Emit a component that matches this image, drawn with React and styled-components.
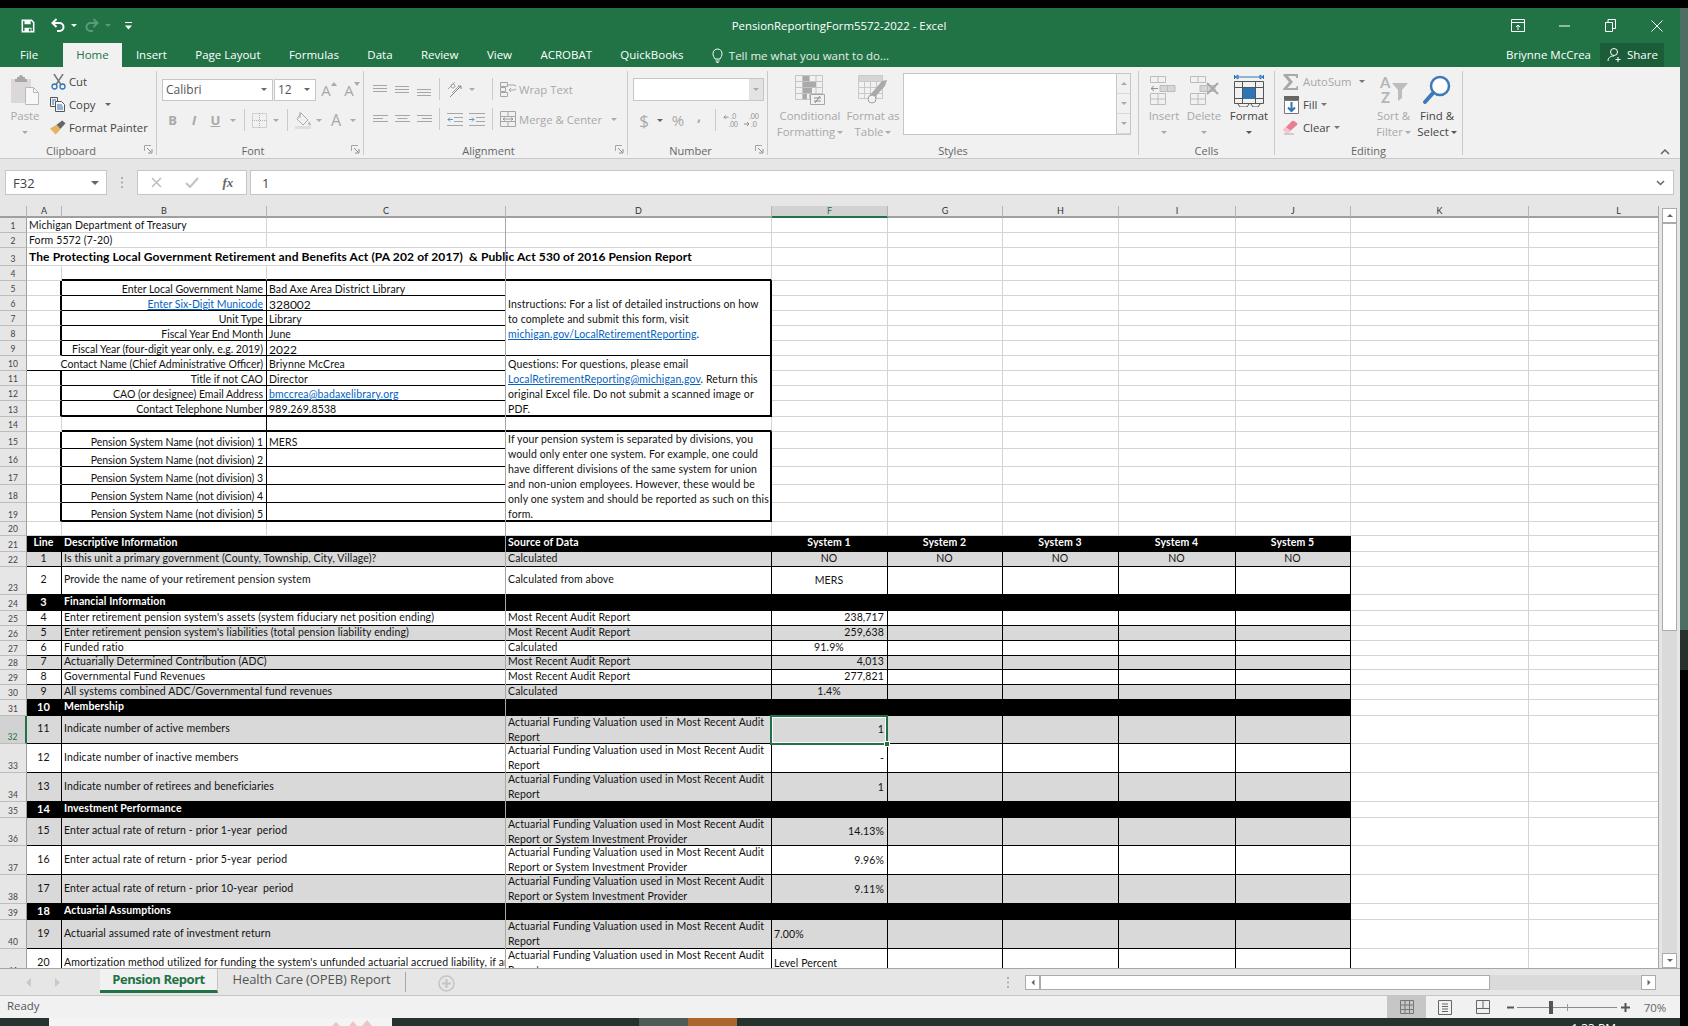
import React from "react";
import styled, { createGlobalStyle } from "styled-components";

const UI = '"Open Sans", "Noto Sans", sans-serif';
const CELL = 'Lato, "Liberation Sans", sans-serif';
const OFF = "#a8a8a8";
const ON = "#444";
const GREEN = "#217346";
const LIGHT = "1px solid #d4d4d4";
const THIN = "1px solid #000";
const THICK = "2px solid #000";

const Global = createGlobalStyle`
  html, body { margin: 0; padding: 0; background: #000; overflow: hidden; }
  * { box-sizing: border-box; }
`;

const Page = styled.div`
  width: 1688px;
  height: 1026px;
  display: flex;
  overflow: hidden;
`;
const Win = styled.div`
  width: 1680px;
  height: 1026px;
  padding-top: 8px;
  display: flex;
  flex-direction: column;
  font-family: ${UI};
`;
const Desktop = styled.div`
  width: 8px;
  background: linear-gradient(#000 0 8px, #4d6e65 8px 630px, #26302f 630px 670px, #000 670px);
`;

/* title bar */
const TitleBar = styled.div`
  height: 35px;
  background: ${GREEN};
  display: flex;
  align-items: center;
  color: #fff;
  position: relative;
`;
const Quick = styled.div`
  display: flex;
  align-items: center;
  padding-left: 21px;
  width: 400px;
`;
const Slot = styled.span`
  width: ${(p) => p.$w}px;
  height: ${(p) => p.$h || 20}px;
  flex: none;
  display: inline-flex;
  align-items: center;
  justify-content: center;
  padding-bottom: ${(p) => p.$pb || 0}px;
  color: ${(p) => p.$c || OFF};
  font-size: ${(p) => p.$fs || 12}px;
  font-weight: ${(p) => (p.$b ? 700 : 400)};
  font-style: ${(p) => (p.$i ? "italic" : "normal")};
  text-decoration: ${(p) => (p.$u ? "underline" : "none")};
`;
const DocTitle = styled.div`
  width: 630px;
  margin-left: 124px;
  text-align: center;
  font-size: 11.4px;
`;
const WinButtons = styled.div`
  margin-left: auto;
  display: flex;
  align-items: center;
`;

/* tabs */
const TabBar = styled.div`
  height: 24px;
  background: ${GREEN};
  display: flex;
  color: #fff;
  font-size: 11.5px;
`;
const Tab = styled.div`
  padding: 0 ${(p) => p.$pad ?? 14.2}px;
  line-height: 24px;
  flex: none;
  background: ${(p) => (p.$on ? "#f1f1f1" : "transparent")};
  color: ${(p) => (p.$on ? GREEN : "#fff")};
`;
const TellMe = styled.div`
  margin-left: 14px;
  display: flex;
  align-items: center;
  gap: 6px;
  color: #e6efe9;
`;
const User = styled.div`
  margin-left: auto;
  display: flex;
  align-items: stretch;
  margin-right: 16px;
  line-height: 24px;
`;
const Share = styled.div`
  margin-left: 9px;
  width: 64px;
  background: #1b5d39;
  display: flex;
  align-items: center;
  gap: 4px;
  padding-left: 7px;
`;

/* ribbon */
const Ribbon = styled.div`
  height: 92px;
  background: #f1f1f1;
  border-bottom: 1px solid #c9c9c9;
  display: flex;
  position: relative;
  font-size: 11.3px;
  color: ${ON};
`;
const Group = styled.div`
  width: ${(p) => p.$w}px;
  flex: none;
  height: 84px;
  margin-top: 4px;
  border-right: 1px solid #c9c9c9;
  position: relative;
`;
const GroupBody = styled.div`
  height: 66px;
  display: flex;
  padding-left: ${(p) => p.$pl || 0}px;
  flex-direction: ${(p) => (p.$col ? "column" : "row")};
  align-items: flex-start;
`;
const GroupLabel = styled.div`
  height: 18px;
  padding: 7px ${(p) => (p.$launch ? 14 : 0)}px 0 0;
  line-height: 14px;
  text-align: center;
  color: #666;
  font-size: 11px;
`;
const Launcher = styled.svg`
  position: absolute;
  right: 3px;
  bottom: 1px;
`;
const Collapse = styled.svg`
  position: absolute;
  left: 1660px;
  top: 81px;
`;
const Big = styled.div`
  width: ${(p) => p.$w}px;
  flex: none;
  display: flex;
  flex-direction: column;
  align-items: center;
  color: ${(p) => (p.$on ? ON : OFF)};
  font-size: 11.4px;
  line-height: 16px;
  white-space: nowrap;
  margin-left: ${(p) => p.$ml || 0}px;
`;
const BigIcon = styled.div`
  height: 37px;
  display: flex;
  align-items: center;
  justify-content: center;
`;
const CaretLine = styled.div`
  height: 16px;
  display: flex;
  align-items: center;
  gap: 2px;
`;
const Caret = styled.i`
  display: inline-block;
  width: 0;
  height: 0;
  flex: none;
  border-left: ${(p) => p.$s || 3}px solid transparent;
  border-right: ${(p) => p.$s || 3}px solid transparent;
  border-top: ${(p) => p.$s || 3}px solid ${(p) => p.$c || "#aaa"};
`;
const Stack = styled.div`
  display: flex;
  flex-direction: column;
  margin-left: ${(p) => p.$ml || 0}px;
  margin-top: -1px;
  width: ${(p) => p.$w}px;
  flex: none;
`;
const Line = styled.div`
  height: 23px;
  display: flex;
  align-items: center;
  gap: ${(p) => p.$gap ?? 3}px;
  color: ${(p) => (p.$off ? OFF : ON)};
  white-space: nowrap;
`;
const LineIcon = styled.span`
  width: 16px;
  flex: none;
  display: inline-flex;
  justify-content: center;
`;
const ToolRow = styled.div`
  display: flex;
  align-items: center;
  height: ${(p) => p.$h}px;
  margin-top: ${(p) => p.$mt || 0}px;
  color: ${OFF};
  white-space: nowrap;
`;
const Select = styled.div`
  width: ${(p) => p.$w}px;
  height: 22px;
  margin-right: ${(p) => p.$mr || 0}px;
  background: #fff;
  border: 1px solid #c6c6c6;
  display: flex;
  align-items: center;
  justify-content: space-between;
  padding: 0 5px 1px 3px;
  color: #555;
  font-size: 12px;
  flex: none;
`;
const NumberFormat = styled.div`
  width: 131px;
  height: 23px;
  background: #fff;
  border: 1px solid #c6c6c6;
  display: flex;
  justify-content: flex-end;
`;
const NumberDrop = styled.div`
  width: 14px;
  background: #e3e3e3;
  display: flex;
  align-items: center;
  justify-content: center;
`;
const Sep = styled.i`
  width: 1px;
  height: 22px;
  background: #c9c9c9;
  display: block;
`;
const Gallery = styled.div`
  width: 228px;
  height: 62px;
  margin: 2px 0 0 4px;
  display: flex;
  flex: none;
  border: 1px solid #c6c6c6;
  background: #fff;
`;
const GalleryRail = styled.div`
  margin-left: auto;
  width: 14px;
  background: #f1f1f1;
  border-left: 1px solid #c6c6c6;
  display: flex;
  flex-direction: column;
`;
const GalleryBtn = styled.div`
  flex: 1;
  display: flex;
  align-items: center;
  justify-content: center;
  border-bottom: 1px solid #d8d8d8;
`;

/* formula bar */
const FormulaBar = styled.div`
  height: 47px;
  background: #e6e6e6;
  padding: 11px 6px 11px 5px;
  display: flex;
  align-items: stretch;
  color: #444;
  font-size: 13px;
`;
const NameBox = styled.div`
  width: 102px;
  background: #fff;
  border: 1px solid #c6c6c6;
  padding: 0 7px;
  display: flex;
  align-items: center;
  justify-content: space-between;
`;
const Grip = styled.div`
  width: 30px;
  display: flex;
  align-items: center;
  justify-content: center;
`;
const FxBox = styled.div`
  width: 110px;
  background: #fff;
  border: 1px solid #c6c6c6;
  display: flex;
  align-items: center;
  justify-content: space-around;
  margin-right: 3px;
  padding: 0 1px;
`;
const Fx = styled.span`
  font-family: "Liberation Serif", serif;
  font-style: italic;
  font-weight: 700;
  font-size: 13px;
  color: #666;
`;
const FormulaInput = styled.div`
  flex: 1;
  background: #fff;
  border: 1px solid #c6c6c6;
  padding: 0 8px 0 11px;
  display: flex;
  align-items: center;
  justify-content: space-between;
`;

/* sheet */
const SheetArea = styled.div`
  display: flex;
  height: 762px;
  background: #e6e6e6;
`;
const GridWrap = styled.div`
  width: 1659px;
  height: 762px;
  overflow: hidden;
  border-right: 1px solid #a6a6a6;
  position: relative;
  flex: none;
`;
const Sheet = styled.table`
  border-collapse: separate;
  border-spacing: 0;
  table-layout: fixed;
  width: 1709px;
  background: #fff;
  color: #111;
  font-family: ${CELL};
`;
const Tr = styled.tr`
  height: ${(p) => p.$h}px;
`;
const ColHead = styled.th`
  height: 12px;
  padding: 0;
  background: ${(p) => (p.$on ? "#d2d2d2" : "#e6e6e6")};
  border-right: 1px solid #b5b5b5;
  border-bottom: ${(p) => (p.$on ? `2px solid ${GREEN}` : "2px solid #9f9f9f")};
  font: 400 9px/10px ${CELL};
  color: ${(p) => (p.$on ? GREEN : "#333")};
  overflow: hidden;
`;
const RowNo = styled.th`
  padding: 0 0 1px;
  background: ${(p) => (p.$on ? "#d2d2d2" : "#e6e6e6")};
  border-right: ${(p) => (p.$on ? `2px solid ${GREEN}` : "1px solid #9f9f9f")};
  border-bottom: 1px solid #bdbdbd;
  font: 400 8.5px/10px ${CELL};
  color: ${(p) => (p.$on ? GREEN : "#444")};
  vertical-align: bottom;
  overflow: hidden;
`;
const Td = styled.td`
  padding: 0 3px 0 2px;
  border-right: ${(p) => p.$r || LIGHT};
  border-bottom: ${(p) => p.$b || LIGHT};
  background: ${(p) => p.$bg || "transparent"};
  color: ${(p) => p.$c || "inherit"};
  text-align: ${(p) => p.$a || "left"};
  font-weight: ${(p) => (p.$bold ? 700 : 400)};
  font-size: ${(p) => p.$fs || 10.5}px;
  letter-spacing: ${(p) => (p.$fs === 12 ? 0 : 0.12)}px;
  line-height: 11px;
  white-space: pre;
  overflow: hidden;
`;
const DataCell = styled(Td)`
  padding-bottom: ${(p) => (p.$flat ? 0 : 2)}px;
`;
const Title = styled(Td)`
  font-size: 12px;
  font-weight: 700;
  letter-spacing: 0.12px;
  color: #000;
`;
const FormLabel = styled(Td)`
  text-align: right;
  letter-spacing: 0;
  border-right: ${THIN};
  border-bottom: ${(p) => p.$b || THIN};
  padding-top: ${(p) => (p.$low ? 0 : 2)}px;
  vertical-align: ${(p) => (p.$low ? "bottom" : "middle")};
`;
const FormValue = styled(Td)`
  border-right: ${THIN};
  border-bottom: ${(p) => p.$b || THIN};
  padding-top: ${(p) => (p.$low ? 0 : 2)}px;
  vertical-align: ${(p) => (p.$low ? "bottom" : "middle")};
`;
const Note = styled(Td)`
  border-right: ${THICK};
  border-bottom: ${(p) => p.$b || THIN};
  padding-top: 2px;
  vertical-align: middle;
`;
const NoteBody = styled.div`
  height: 30px;
  line-height: 15px;
  display: flex;
  flex-direction: column;
  justify-content: center;
`;
const A = styled.a`
  color: #0563c1;
  text-decoration: underline;
`;
const Two = styled.div`
  height: 22px;
  padding-top: 2px;
  line-height: 15px;
  display: flex;
  flex-direction: column;
  justify-content: center;
`;
const FreezeLine = styled.div`
  position: absolute;
  left: 505px;
  top: 12px;
  bottom: 0;
  width: 1px;
  background: #a6a6a6;
`;
const Selection = styled.div`
  position: absolute;
  left: 770px;
  top: 509px;
  width: 118px;
  height: 30px;
  border: 2px solid ${GREEN};
  outline: 1px solid #fff;
  outline-offset: -3px;
`;
const Handle = styled.div`
  position: absolute;
  right: -4px;
  bottom: -4px;
  width: 6px;
  height: 6px;
  background: ${GREEN};
  border: 1px solid #fff;
`;
const VScroll = styled.div`
  width: 21px;
  padding: 2px 3px 0 3px;
  display: flex;
  flex-direction: column;
  flex: none;
`;
const ScrollBtn = styled.div`
  flex: none;
  width: ${(p) => p.$w || 15}px;
  height: ${(p) => p.$h || 15}px;
  background: #fff;
  border: 1px solid #ababab;
  display: flex;
  align-items: center;
  justify-content: center;
  margin-left: ${(p) => (p.$end ? "auto" : 0)};
`;
const VTrack = styled.div`
  flex: 1;
  width: 15px;
  background: #dadada;
`;
const VThumb = styled.div`
  height: 408px;
  background: #fff;
  border: 1px solid #ababab;
`;

/* sheet tabs */
const TabsBar = styled.div`
  height: 28px;
  background: #e6e6e6;
  border-top: 1px solid #a6a6a6;
  display: flex;
  align-items: flex-start;
  font-size: 13px;
  color: #555;
  padding-right: 24px;
  border-bottom: 1px solid #c6c6c6;
`;
const SheetNav = styled.div`
  width: 100px;
  height: 26px;
  padding-left: 26px;
  display: flex;
  align-items: center;
  gap: 22px;
`;
const SheetTab = styled.div`
  height: 24px;
  line-height: 20px;
  flex: none;
  width: ${(p) => p.$w}px;
  text-align: center;
  background: ${(p) => (p.$on ? "#f1f1f1" : "transparent")};
  color: ${(p) => (p.$on ? GREEN : "#555")};
  font-weight: ${(p) => (p.$on ? 700 : 400)};
  border-bottom: ${(p) => (p.$on ? `3px solid ${GREEN}` : "none")};
  border-right: ${(p) => (p.$on ? "1px solid #c6c6c6" : "none")};
  letter-spacing: ${(p) => (p.$on ? -0.45 : -0.1)}px;
`;
const TabEdge = styled.i`
  width: 1px;
  height: 20px;
  margin-top: 3px;
  background: #a6a6a6;
  display: block;
`;
const AddSheet = styled.svg`
  margin: 6px 0 0 32px;
`;
const HGrip = styled.div`
  margin-left: auto;
  margin-right: 9px;
  width: 16px;
  height: 26px;
  display: flex;
  align-items: center;
  justify-content: center;
`;
const HScroll = styled.div`
  display: flex;
  margin-top: 6px;
  width: 631px;
  height: 15px;
  background: #dadada;
  flex: none;
`;
const HThumb = styled.div`
  width: 450px;
  background: #fff;
  border: 1px solid #ababab;
`;

/* status */
const Status = styled.div`
  height: 22px;
  background: #f1f1f1;
  display: flex;
  align-items: center;
  font-size: 11.4px;
  color: #555;
  padding-left: 7px;
`;
const Ready = styled.span`
  margin-top: -3px;
`;
const StatusRight = styled.div`
  margin-left: auto;
  display: flex;
  align-items: center;
  height: 22px;
`;
const ViewBtn = styled.div`
  width: ${(p) => p.$w || 38}px;
  height: 22px;
  background: ${(p) => (p.$on ? "#c6c6c6" : "transparent")};
  display: flex;
  align-items: center;
  justify-content: center;
`;
const Zoom = styled.div`
  width: 100px;
  height: 1px;
  background: #8a8a8a;
  position: relative;
  margin: 0 3px 0 2px;
`;
const ZoomThumb = styled.i`
  position: absolute;
  left: 32px;
  top: -6px;
  width: 4px;
  height: 13px;
  background: #555;
`;
const ZoomTick = styled.i`
  position: absolute;
  left: 50px;
  top: -3px;
  width: 1px;
  height: 7px;
  background: #9a9a9a;
`;

const Taskbar = styled.div`
  height: 8px;
  background: #263130;
  display: flex;
  overflow: hidden;
  color: #fff;
  font-size: 12px;
`;
const Seg = styled.div`
  width: ${(p) => p.$w}px;
  flex: none;
  background: ${(p) => p.$bg};
  display: flex;
  justify-content: flex-end;
  padding-right: ${(p) => p.$pr || 0}px;
`;
const Clock = styled.span`
  margin-left: auto;
  margin-right: 64px;
  line-height: 16px;
  height: 16px;
  margin-top: 3px;
`;

/* icons */
const I = ({ w, h, children }) => (
  <svg width={w} height={h} viewBox={`0 0 ${w} ${h}`} fill="none">
    {children}
  </svg>
);
const LauncherIcon = () => (
  <Launcher width="9" height="9" viewBox="0 0 9 9" fill="none">
    <path d="M.5 6V.5H7" stroke="#a6a6a6" />
    <path d="M3 3l4 4M8 4v4H4" stroke="#8d8d8d" />
  </Launcher>
);
const Save = () => (
  <I w={16} h={16}>
    <path d="M1.5 1.5h10.5l2.5 2.5v10.500h-13z" stroke="#fff" strokeWidth="1.800" />
    <path d="M4 2h7v4H4zM4 10h8v4H4z" fill="#fff" />
    <path d="M9 11h2v3H9z" fill={GREEN} />
  </I>
);
const Undo = ({ c }) => (
  <I w={16} h={15}>
    <path d="M5.500 1L1.500 5l4 4" stroke={c} strokeWidth="2" />
    <path d="M2 5h6.500a4 4 0 1 1 0 8H6" stroke={c} strokeWidth="2" />
  </I>
);
const Redo = ({ c }) => (
  <I w={16} h={15}>
    <path d="M10.500 1l4 4-4 4" stroke={c} strokeWidth="2" />
    <path d="M14 5H7.500a4 4 0 1 0 0 8H10" stroke={c} strokeWidth="2" />
  </I>
);
const PasteIcon = () => (
  <I w={28} h={31}>
    <path d="M0 5h20v24H0z" fill="#dcd8d9" />
    <path d="M6 3h2a2 2 0 0 1 4 0h2v2h2v3H4V5h2z" fill="#a7a7a7" />
    <path d="M14.500 13.500h8l5 5v12h-13z" fill="#f7f7f7" stroke="#b9b9b9" />
    <path d="M22.500 13.500v5h5" stroke="#b9b9b9" />
  </I>
);
const CutIcon = () => (
  <I w={15} h={16}>
    <path d="M3 0l6.500 10M12 0L5.500 10" stroke="#777" strokeWidth="1.500" />
    <circle cx="3.500" cy="12.500" r="2.500" stroke="#2e75b6" strokeWidth="1.300" />
    <circle cx="11.500" cy="12.500" r="2.500" stroke="#2e75b6" strokeWidth="1.300" />
  </I>
);
const CopyIcon = () => (
  <I w={16} h={15}>
    <path d="M.5.500h7v9h-7z" stroke="#555" />
    <path d="M5.500 4.500h6l3 3v7h-9z" fill="#f7f7f7" stroke="#555" />
    <path d="M7 8h5M7 10h6M7 12h6M2 3h4M2 5h2M2 7h2" stroke="#2e75b6" />
  </I>
);
const PainterIcon = () => (
  <I w={17} h={15}>
    <path d="M0 8.500l7-4 4 5-5 5.500z" fill="#e6b35f" />
    <path d="M7 4.500l6-4.500 3.500 3-5.500 6z" fill="#666" />
  </I>
);
const CornerA = ({ down, w }) => (
  <Slot $w={w} $fs={15} $c={OFF}>
    A
    <svg width="6" height="4" viewBox="0 0 6 4" style={{ marginTop: -12 }}>
      <path d={down ? "M0 0h6L3 4z" : "M0 4h6L3 0z"} fill="#aaa" />
    </svg>
  </Slot>
);
const BorderIcon = () => (
  <I w={15} h={15}>
    <path d="M.5.500h14v14H.5zM7.500 0v15M0 7.500h15" stroke="#b0b0b0" strokeDasharray="1 1" />
  </I>
);
const FillIcon = () => (
  <I w={17} h={17}>
    <path d="M6 1l7 7-5 5-6-6z" stroke="#aaa" />
    <path d="M5 0v6" stroke="#aaa" />
    <path d="M14 9l2 3-1 2-2-2z" fill="#bbb" />
    <rect y="14" width="16" height="3" fill="#dedede" />
  </I>
);
const Lines = ({ ws, y = 0, right, center }) => (
  <I w={15} h={9 + y}>
    {ws.map((l, i) => {
      const x = right ? 15 - l : center ? (15 - l) / 2 : 0;
      return <path key={i} d={`M${x} ${y + i * 3 + 0.5}h${l}`} stroke="#a6a6a6" />;
    })}
  </I>
);
const Orient = () => (
  <I w={17} h={17}>
    <path d="M1 8l7-7M5 12l7-7" stroke="#a6a6a6" />
    <circle cx="6" cy="5" r="2" stroke="#a6a6a6" />
    <path d="M3 16l11-11M14 5h-3M14 5v3" stroke="#888" />
  </I>
);
const WrapIcon = () => (
  <I w={16} h={15}>
    <path d="M.5.500h7v4h-7zM.5 5.500h5v4h-5zM.5 10.500h7v4h-7z" stroke="#a6a6a6" />
    <path d="M8 3h6a2 2 0 0 1 0 5h-4M11 6l-2 2 2 2" stroke="#a6a6a6" />
  </I>
);
const MergeIcon = () => (
  <I w={16} h={16}>
    <path d="M.5.500h15v15H.5zM0 5.500h16M0 10.500h16M8 .5v5M8 10.500v5" stroke="#a6a6a6" />
    <path d="M3 8h10M3 8l2-1.500M3 8l2 1.500M13 8l-2-1.500M13 8l-2 1.500" stroke="#999" />
  </I>
);
const Indent = ({ flip }) => (
  <I w={16} h={13}>
    <path d="M0 .5h16M0 12.500h16M7 4.500h9M7 8.500h9" stroke="#a6a6a6" />
    <path d={flip ? "M0 6.500h5M3 4.500l2 2-2 2" : "M6 6.500H1M3 4.500l-2 2 2 2"} stroke="#6f93b8" />
  </I>
);
const DecIcon = ({ a, b, flip }) => (
  <I w={19} h={15}>
    <text x={flip ? 6 : 8} y="6" fontSize="7" fontFamily="Lato" fill="#8f8f8f">
      {a}
    </text>
    <text x={flip ? 8 : 6} y="14" fontSize="7" fontFamily="Lato" fill="#8f8f8f">
      {b}
    </text>
    <path d={flip ? "M1 11h5M4 9l2 2-2 2" : "M1 4h5M3 2L1 4l2 2"} stroke="#8f8f8f" />
  </I>
);
const CondIcon = () => (
  <I w={30} h={30}>
    <path d="M.5.500h27v24H.5zM7.500 0v25M14.500 0v25M21 0v25M0 6.500h28M0 12.500h28M0 18.500h28" stroke="#c4c4c4" />
    <path d="M8 1h6v5H8zM8 7h13v5H8zM8 13h9v5H8zM8 19h4v5H8z" fill="#a9a9a9" />
    <path d="M15.500 19.500h14v10h-14z" fill="#f1f1f1" stroke="#a6a6a6" />
    <path d="M19 23h7M19 26h7M25 21l-5 7" stroke="#8a8a8a" />
  </I>
);
const TableIcon = () => (
  <I w={30} h={29}>
    <path d="M.5.500h24v23H.5zM6.500 0v24M12.500 0v24M18.500 0v24M0 6.500h25M0 12.500h25M0 18.500h25" stroke="#c9c9c9" />
    <path d="M1 1h23v5H1z" fill="#d5d5d5" />
    <path d="M12 20l12-14 5-1-2 6-11 12z" fill="#a9a9a9" />
    <circle cx="14" cy="24" r="4" fill="#f1f1f1" stroke="#a0a0a0" />
  </I>
);
const CellsIcon = ({ del }) => (
  <I w={30} h={30}>
    <path d="M1.500 1.500h15v6h-15zM9 1v7M1.500 18.500h15v11h-15zM1.500 24h15M9 18v11" stroke="#bcbcbc" />
    <path d="M11 10.500h15v6H11zM18.500 10v7" fill="#d6d6d6" stroke="#bcbcbc" />
    {del ? <path d="M18 8l11 11M29 8L18 19" stroke="#a8a8a8" strokeWidth="2" /> : <path d="M2 13.500h7M5 11l-3 2.500L5 16" stroke="#8f8f8f" />}
  </I>
);
const FormatIcon = () => (
  <I w={30} h={34}>
    <path d="M1 4h28M1 4l3-2v4zM29 4l-3-2v4z" stroke="#2e75b6" />
    <path d="M.5 2v4M29.500 2v4" stroke="#2e75b6" />
    <path d="M.5 8.500h29v22H.5zM8.500 8v22M21.500 8v22M0 14.500h30M0 25.500h30" stroke="#555" />
    <path d="M9 15h12v11H9z" fill="#2e75b6" />
    <path d="M4 31l2 3h7l2-3M17 31l2 3h5l2-3" stroke="#555" />
  </I>
);
const Sigma = () => (
  <I w={16} h={16}>
    <path d="M1 0h14v4h-1.500l-1-2H5l5 6-5.500 6h8.500l1-2H15v4H0v-1l6-7L0 1z" fill="#a9a9a9" />
  </I>
);
const FillDown = () => (
  <I w={15} h={18}>
    <rect x="0" y="0" width="15" height="4" fill="#666" />
    <path d="M.5 4.500h14v13H.5z" fill="#fff" stroke="#777" />
    <path d="M7.500 6v9M4 11.500l3.500 3.500 3.500-3.500" stroke="#2e75b6" strokeWidth="2" />
  </I>
);
const Eraser = () => (
  <I w={16} h={15}>
    <path d="M0 10l9-9a2 2 0 0 1 2 0l3 2a2 2 0 0 1 0 2l-8 7z" fill="#e87f93" />
    <path d="M0 10l3-3 5 4-2 2H3z" fill="#f4c6cf" />
    <path d="M1 14h10" stroke="#aaa" />
  </I>
);
const SortIcon = () => (
  <I w={30} h={30}>
    <text x="1" y="13" fontSize="15" fontWeight="700" fontFamily="Lato" fill="#b5b5b5">
      A
    </text>
    <text x="2" y="28" fontSize="15" fontWeight="700" fontFamily="Lato" fill="#b5b5b5">
      Z
    </text>
    <path d="M13 8h16l-6 7v8l-4 3V15z" fill="#bdbdbd" />
  </I>
);
const FindIcon = () => (
  <I w={30} h={30}>
    <circle cx="18" cy="11" r="9" fill="#fff" stroke="#3c7ab8" strokeWidth="2.500" />
    <path d="M11 18L3 27" stroke="#3c7ab8" strokeWidth="4" strokeLinecap="round" />
  </I>
);

const COLS = [
  ["", 27],
  ["A", 35],
  ["B", 205],
  ["C", 239],
  ["D", 266],
  ["F", 116],
  ["G", 115],
  ["H", 116],
  ["I", 117],
  ["J", 115],
  ["K", 178],
  ["L", 180],
];
const HEIGHTS = [15, 15, 18, 15, 15, 15, 15, 15, 15, 15, 15, 15, 16, 15, 17, 18, 18, 18, 19, 14, 16, 15, 28, 16, 15, 15, 15, 14, 15, 15, 16, 28, 29, 29, 16, 28, 29, 29, 16, 29, 29];

const blanks = (n) => Array.from({ length: n }, (_, i) => <Td key={"b" + i} />);

const FormRow = ({ n, children }) => (
  <Tr $h={HEIGHTS[n - 1]}>
    <RowNo>{n}</RowNo>
    {children}
    {blanks(7)}
  </Tr>
);

const FORM = [
  { n: 5, label: "Enter Local Government Name", value: "Bad Axe Area District Library" },
  { n: 6, label: <A>Enter Six-Digit Municode</A>, value: "328002", big: true },
  { n: 7, label: "Unit Type", value: "Library" },
  { n: 8, label: "Fiscal Year End Month", value: "June" },
  { n: 9, label: "Fiscal Year (four-digit year only, e.g. 2019)", value: "2022", big: true },
  { n: 10, label: "Contact Name (Chief Administrative Officer)", value: "Briynne McCrea", open: true },
  { n: 11, label: "Title if not CAO", value: "Director" },
  { n: 12, label: "CAO (or designee) Email Address", value: <A>bmccrea@badaxelibrary.org</A> },
  { n: 13, label: "Contact Telephone Number", value: "989.269.8538", last: true },
];

const NOTES = {
  5: {
    span: 5,
    lines: [
      "Instructions: For a list of detailed instructions on how",
      "to complete and submit this form, visit",
      <span key="l"><A>michigan.gov/LocalRetirementReporting</A>.</span>,
    ],
  },
  10: {
    span: 4,
    last: true,
    lines: [
      "Questions: For questions, please email",
      <span key="l"><A>LocalRetirementReporting@michigan.gov</A>. Return this</span>,
      "original Excel file. Do not submit a scanned image or",
      "PDF.",
    ],
  },
  15: {
    span: 5,
    last: true,
    lines: [
      "If your pension system is separated by divisions, you",
      "would only enter one system. For example, one could",
      "have different divisions of the same system for union",
      "and non-union employees. However, these would be",
      "only one system and should be reported as such on this",
      "form.",
    ],
  },
};

const NoteCell = ({ n }) => {
  const note = NOTES[n];
  if (!note) return null;
  return (
    <Note rowSpan={note.span} $b={note.last ? THICK : THIN}>
      <NoteBody>
        {note.lines.map((l, i) => (
          <div key={i}>{l}</div>
        ))}
      </NoteBody>
    </Note>
  );
};

const audit = ["Actuarial Funding Valuation used in Most Recent Audit", "Report"];
const provider = ["Actuarial Funding Valuation used in Most Recent Audit", "Report or System Investment Provider"];
const none = [];

const DATA = [
  { n: 21, k: "black", line: "Line", desc: "Descriptive Information", src: "Source of Data", vals: ["System 1", "System 2", "System 3", "System 4", "System 5"], a: "center" },
  { n: 22, k: "gray", line: "1", desc: "Is this unit a primary government (County, Township, City, Village)?", src: "Calculated", vals: ["NO", "NO", "NO", "NO", "NO"], a: "center" },
  { n: 23, k: "white", line: "2", desc: "Provide the name of your retirement pension system", src: "Calculated from above", vals: ["MERS"], a: "center" },
  { n: 24, k: "black", line: "3", desc: "Financial Information" },
  { n: 25, k: "white", line: "4", desc: "Enter retirement pension system's assets (system fiduciary net position ending)", src: "Most Recent Audit Report", vals: ["238,717"], a: "right" },
  { n: 26, k: "gray", line: "5", desc: "Enter retirement pension system's liabilities (total pension liability ending)", src: "Most Recent Audit Report", vals: ["259,638"], a: "right" },
  { n: 27, k: "white", line: "6", desc: "Funded ratio", src: "Calculated", vals: ["91.9%"], a: "center" },
  { n: 28, k: "gray", line: "7", desc: "Actuarially Determined Contribution (ADC)", src: "Most Recent Audit Report", vals: ["4,013"], a: "right" },
  { n: 29, k: "white", line: "8", desc: "Governmental Fund Revenues", src: "Most Recent Audit Report", vals: ["277,821"], a: "right" },
  { n: 30, k: "gray", line: "9", desc: "All systems combined ADC/Governmental fund revenues", src: "Calculated", vals: ["1.4%"], a: "center" },
  { n: 31, k: "black", line: "10", desc: "Membership" },
  { n: 32, k: "gray", line: "11", desc: "Indicate number of active members", src: audit, vals: ["1"], a: "right" },
  { n: 33, k: "white", line: "12", desc: "Indicate number of inactive members", src: audit, vals: ["-"], a: "right" },
  { n: 34, k: "gray", line: "13", desc: "Indicate number of retirees and beneficiaries", src: audit, vals: ["1"], a: "right" },
  { n: 35, k: "black", line: "14", desc: "Investment Performance" },
  { n: 36, k: "gray", line: "15", desc: "Enter actual rate of return - prior 1-year  period", src: provider, vals: ["14.13%"], a: "right" },
  { n: 37, k: "white", line: "16", desc: "Enter actual rate of return - prior 5-year  period", src: provider, vals: ["9.96%"], a: "right" },
  { n: 38, k: "gray", line: "17", desc: "Enter actual rate of return - prior 10-year  period", src: provider, vals: ["9.11%"], a: "right" },
  { n: 39, k: "black", line: "18", desc: "Actuarial Assumptions" },
  { n: 40, k: "gray", line: "19", desc: "Actuarial assumed rate of investment return", src: audit, vals: ["7.00%"], a: "left" },
  { n: 41, k: "white", line: "20", desc: "Amortization method utilized for funding the system's unfunded actuarial accrued liability, if any", src: audit, vals: ["Level Percent"], a: "left" },
];

const DataRow = ({ row }) => {
  const black = row.k === "black";
  const bg = black ? "#000" : row.k === "gray" ? "#d9d9d9" : "#fff";
  const c = black ? "#fff" : "#111";
  const v = THIN;
  const vals = row.vals || none;
  const tall = HEIGHTS[row.n - 1] > 16;
  return (
    <Tr $h={HEIGHTS[row.n - 1]}>
      <RowNo $on={row.n === 32}>{row.n}</RowNo>
      <DataCell $bg={bg} $c={c} $a="center" $r={v} $b={v} $bold={black} $fs={black && row.n !== 21 ? 11 : 10.5}>
        {row.line}
      </DataCell>
      <DataCell colSpan={2} $bg={bg} $c={c} $r={v} $b={v} $bold={black}>
        {row.desc}
      </DataCell>
      <DataCell $bg={bg} $c={c} $r={v} $b={v} $bold={black && row.n === 21}>
        {Array.isArray(row.src) ? (
          <Two>
            <div>{row.src[0]}</div>
            <div>{row.src[1]}</div>
          </Two>
        ) : (
          row.src
        )}
      </DataCell>
      {[0, 1, 2, 3, 4].map((i) => (
        <DataCell key={i} $flat={tall} $bg={bg} $c={c} $r={v} $b={v} $a={row.a} $bold={black}>
          {vals[i]}
        </DataCell>
      ))}
      {blanks(2)}
    </Tr>
  );
};

const Ribbons = () => (
  <Ribbon>
    <Group $w={157}>
      <GroupBody>
        <Big $w={40} $ml={5}>
          <BigIcon><PasteIcon /></BigIcon>
          <span>Paste</span>
          <CaretLine><Caret /></CaretLine>
        </Big>
        <Stack $ml={5} $w={105}>
          <Line><LineIcon><CutIcon /></LineIcon>Cut</Line>
          <Line><LineIcon><CopyIcon /></LineIcon>Copy<Slot $w={20}><Caret $c="#666" /></Slot></Line>
          <Line><LineIcon><PainterIcon /></LineIcon>Format Painter</Line>
        </Stack>
      </GroupBody>
      <GroupLabel $launch>Clipboard</GroupLabel>
      <LauncherIcon />
    </Group>

    <Group $w={207}>
      <GroupBody $col $pl={5}>
        <ToolRow $h={22} $mt={8}>
          <Select $w={111} $mr={1}>Calibri<Caret $c="#666" /></Select>
          <Select $w={42}>12<Caret $c="#666" /></Select>
          <CornerA w={26} />
          <CornerA down w={20} />
        </ToolRow>
        <ToolRow $h={20} $mt={9}>
          <Slot $w={21} $b $fs={13}>B</Slot>
          <Slot $w={22} $i $b $fs={13}>I</Slot>
          <Slot $w={21} $u $b $fs={13}>U</Slot>
          <Slot $w={14}><Caret /></Slot>
          <Slot $w={8}><Sep /></Slot>
          <Slot $w={22}><BorderIcon /></Slot>
          <Slot $w={12}><Caret /></Slot>
          <Slot $w={10}><Sep /></Slot>
          <Slot $w={22}><FillIcon /></Slot>
          <Slot $w={10}><Caret /></Slot>
          <Slot $w={24} $fs={16}>A</Slot>
          <Slot $w={10}><Caret /></Slot>
        </ToolRow>
      </GroupBody>
      <GroupLabel $launch>Font</GroupLabel>
      <LauncherIcon />
    </Group>

    <Group $w={264}>
      <GroupBody $col $pl={5}>
        <ToolRow $h={24} $mt={6}>
          <Slot $w={22}><Lines ws={[14, 14, 14]} /></Slot>
          <Slot $w={22}><Lines ws={[14, 14, 14]} y={3} /></Slot>
          <Slot $w={22}><Lines ws={[14, 14, 14]} y={9} /></Slot>
          <Slot $w={8}><Sep /></Slot>
          <Slot $w={24}><Orient /></Slot>
          <Slot $w={10}><Caret /></Slot>
          <Slot $w={11} />
          <Slot $w={8}><Sep /></Slot>
          <Slot $w={23}><WrapIcon /></Slot>
          <span>Wrap Text</span>
        </ToolRow>
        <ToolRow $h={24} $mt={6}>
          <Slot $w={22}><Lines ws={[15, 10, 15, 10]} /></Slot>
          <Slot $w={22}><Lines ws={[15, 10, 15, 10]} center /></Slot>
          <Slot $w={22}><Lines ws={[15, 10, 15, 10]} right /></Slot>
          <Slot $w={8}><Sep /></Slot>
          <Slot $w={23}><Indent /></Slot>
          <Slot $w={22}><Indent flip /></Slot>
          <Slot $w={8}><Sep /></Slot>
          <Slot $w={23}><MergeIcon /></Slot>
          <span>Merge &amp; Center</span>
          <Slot $w={24}><Caret /></Slot>
        </ToolRow>
      </GroupBody>
      <GroupLabel $launch>Alignment</GroupLabel>
      <LauncherIcon />
    </Group>

    <Group $w={140}>
      <GroupBody $col $pl={5}>
        <ToolRow $h={23} $mt={7}>
          <NumberFormat><NumberDrop><Caret /></NumberDrop></NumberFormat>
        </ToolRow>
        <ToolRow $h={22} $mt={8}>
          <Slot $w={22} $fs={17} $h={22}>$</Slot>
          <Slot $w={10}><Caret $c="#666" /></Slot>
          <Slot $w={26} $fs={15}>%</Slot>
          <Slot $w={16} $b $fs={14} $pb={9}>,</Slot>
          <Slot $w={16}><Sep /></Slot>
          <Slot $w={18}><DecIcon a=".0" b=".00" /></Slot>
          <Slot $w={22}><DecIcon a=".00" b=".0" flip /></Slot>
        </ToolRow>
      </GroupBody>
      <GroupLabel $launch>Number</GroupLabel>
      <LauncherIcon />
    </Group>

    <Group $w={371}>
      <GroupBody $pl={5}>
        <Big $w={74}>
          <BigIcon><CondIcon /></BigIcon>
          <span>Conditional</span>
          <CaretLine>Formatting<Caret /></CaretLine>
        </Big>
        <Big $w={52}>
          <BigIcon><TableIcon /></BigIcon>
          <span>Format as</span>
          <CaretLine>Table<Caret /></CaretLine>
        </Big>
        <Gallery>
          <GalleryRail>
            <GalleryBtn><Caret style={{ transform: "rotate(180deg)" }} /></GalleryBtn>
            <GalleryBtn><Caret /></GalleryBtn>
            <GalleryBtn><Caret /></GalleryBtn>
          </GalleryRail>
        </Gallery>
      </GroupBody>
      <GroupLabel>Styles</GroupLabel>
    </Group>

    <Group $w={136}>
      <GroupBody $pl={5}>
        <Big $w={40}>
          <BigIcon><CellsIcon /></BigIcon>
          <span>Insert</span>
          <CaretLine><Caret /></CaretLine>
        </Big>
        <Big $w={40}>
          <BigIcon><CellsIcon del /></BigIcon>
          <span>Delete</span>
          <CaretLine><Caret /></CaretLine>
        </Big>
        <Big $w={50} $on>
          <BigIcon><FormatIcon /></BigIcon>
          <span>Format</span>
          <CaretLine><Caret $c="#555" /></CaretLine>
        </Big>
      </GroupBody>
      <GroupLabel>Cells</GroupLabel>
    </Group>

    <Group $w={188}>
      <GroupBody $pl={8}>
        <Stack $w={88}>
          <Line $off $gap={4}><LineIcon><Sigma /></LineIcon>AutoSum<Slot $w={14}><Caret $c="#777" /></Slot></Line>
          <Line $gap={4}><LineIcon><FillDown /></LineIcon>Fill<Caret $c="#777" /></Line>
          <Line $gap={4}><LineIcon><Eraser /></LineIcon>Clear<Caret $c="#777" /></Line>
        </Stack>
        <Big $w={45}>
          <BigIcon><SortIcon /></BigIcon>
          <span>Sort &amp;</span>
          <CaretLine>Filter<Caret /></CaretLine>
        </Big>
        <Big $w={42} $on>
          <BigIcon><FindIcon /></BigIcon>
          <span>Find &amp;</span>
          <CaretLine>Select<Caret $c="#555" /></CaretLine>
        </Big>
      </GroupBody>
      <GroupLabel>Editing</GroupLabel>
    </Group>

    <Collapse width="10" height="7" viewBox="0 0 10 7" fill="none">
      <path d="M1 6l4-4 4 4" stroke="#666" strokeWidth="1.500" />
    </Collapse>
  </Ribbon>
);

export default function App() {
  return (
    <Page>
      <Global />
      <Win>
        <TitleBar>
          <Quick>
            <Slot $w={14}><Save /></Slot>
            <Slot $w={16} style={{ marginLeft: 16 }}><Undo c="#fff" /></Slot>
            <Slot $w={14}><Caret $c="#fff" /></Slot>
            <Slot $w={20}><Redo c="#5a9a78" /></Slot>
            <Slot $w={14}><Caret $c="#5a9a78" /></Slot>
            <Slot $w={26}>
              <I w={7} h={8}>
                <path d="M0 .5h7" stroke="#fff" />
                <path d="M0 3.500h7L3.500 7.500z" fill="#fff" />
              </I>
            </Slot>
          </Quick>
          <DocTitle>PensionReportingForm5572-2022 - Excel</DocTitle>
          <WinButtons>
            <Slot $w={47}>
              <I w={14} h={13}>
                <path d="M.5.500h13v12H.5zM0 3.500h14M7 11V6M5 8l2-2 2 2" stroke="#fff" />
              </I>
            </Slot>
            <Slot $w={46}><I w={11} h={2}><path d="M0 1h11" stroke="#fff" /></I></Slot>
            <Slot $w={46}>
              <I w={11} h={13}>
                <path d="M.5 3.500h7v9h-7zM3 3V.5h7.500v9H8" stroke="#fff" />
              </I>
            </Slot>
            <Slot $w={47}>
              <I w={12} h={12}><path d="M.5.500l11 11M11.500.5l-11 11" stroke="#fff" /></I>
            </Slot>
          </WinButtons>
        </TitleBar>

        <TabBar>
          <Tab $pad={20} style={{ paddingRight: 25 }}>File</Tab>
          <Tab $on $pad={13}>Home</Tab>
          <Tab>Insert</Tab>
          <Tab>Page Layout</Tab>
          <Tab>Formulas</Tab>
          <Tab>Data</Tab>
          <Tab>Review</Tab>
          <Tab>View</Tab>
          <Tab>ACROBAT</Tab>
          <Tab>QuickBooks</Tab>
          <TellMe>
            <I w={11} h={15}>
              <path d="M3 11C2 9 1 8 1 5.500a4.500 4.500 0 0 1 9 0C10 8 9 9 8 11zM3.500 13h4M4.500 14.500h2" stroke="#fff" />
            </I>
            Tell me what you want to do...
          </TellMe>
          <User>
            Briynne McCrea
            <Share>
              <I w={16} h={16}>
                <circle cx="7" cy="5" r="3.500" stroke="#fff" />
                <path d="M1 14c0-3 2-5 6-5M11 10v5M8.500 12.500h5" stroke="#fff" />
              </I>
              Share
            </Share>
          </User>
        </TabBar>

        <Ribbons />

        <FormulaBar>
          <NameBox>F32<Caret $c="#666" $s={4} /></NameBox>
          <Grip>
            <I w={2} h={11}><path d="M1 0v2M1 4.500v2M1 9v2" stroke="#b0b0b0" strokeWidth="2" /></I>
          </Grip>
          <FxBox>
            <I w={11} h={11}><path d="M1 1l9 9M10 1l-9 9" stroke="#bdbdbd" strokeWidth="1.500" /></I>
            <I w={14} h={11}><path d="M1 6l4 4 8-9" stroke="#c2c2c2" strokeWidth="2" /></I>
            <Fx>fx</Fx>
          </FxBox>
          <FormulaInput>
            1
            <I w={9} h={6}><path d="M1 1l3.500 3.500L8 1" stroke="#666" strokeWidth="1.500" /></I>
          </FormulaInput>
        </FormulaBar>

        <SheetArea>
          <GridWrap>
            <Sheet>
              <colgroup>
                {COLS.map(([k, w]) => (
                  <col key={k} width={w} />
                ))}
              </colgroup>
              <thead>
                <tr>
                  {COLS.map(([k]) => (
                    <ColHead key={k} $on={k === "F"}>{k}</ColHead>
                  ))}
                </tr>
              </thead>
              <tbody>
                <FormRow n={1}>
                  <Td colSpan={2}>Michigan Department of Treasury</Td>
                  <Td />
                  <Td />
                </FormRow>
                <FormRow n={2}>
                  <Td colSpan={2}>Form 5572 (7-20)</Td>
                  <Td />
                  <Td />
                </FormRow>
                <FormRow n={3}>
                  <Title colSpan={4}>
                    The Protecting Local Government Retirement and Benefits Act (PA 202 of 2017)&nbsp; &amp; Public Act 530 of 2016 Pension Report
                  </Title>
                </FormRow>
                <FormRow n={4}>
                  <Td />
                  <Td $b={THICK} />
                  <Td $b={THICK} />
                  <Td $b={THICK} />
                </FormRow>
                {FORM.map((f) => (
                  <FormRow key={f.n} n={f.n}>
                    {f.open ? (
                      <FormLabel colSpan={2}>{f.label}</FormLabel>
                    ) : (
                      <>
                        <Td $r={THICK} />
                        <FormLabel $b={f.last ? THICK : THIN}>{f.label}</FormLabel>
                      </>
                    )}
                    <FormValue $b={f.last ? THICK : THIN} $fs={f.big ? 12 : 10.5}>{f.value}</FormValue>
                    <NoteCell n={f.n} />
                  </FormRow>
                ))}
                <FormRow n={14}>
                  <Td />
                  <FormLabel $b={THICK} />
                  <Td $b={THICK} />
                  <Td $b={THICK} />
                </FormRow>
                {[1, 2, 3, 4, 5].map((i) => (
                  <FormRow key={i} n={14 + i}>
                    <Td $r={THICK} />
                    <FormLabel $low $b={i === 5 ? THICK : THIN}>Pension System Name (not division) {i}</FormLabel>
                    <FormValue $low $b={i === 5 ? THICK : THIN}>{i === 1 ? "MERS" : ""}</FormValue>
                    <NoteCell n={14 + i} />
                  </FormRow>
                ))}
                <FormRow n={20}>
                  <Td />
                  <Td />
                  <Td />
                  <Td />
                </FormRow>
                {DATA.map((r) => (
                  <DataRow key={r.n} row={r} />
                ))}
              </tbody>
            </Sheet>
            <FreezeLine />
            <Selection>
              <Handle />
            </Selection>
          </GridWrap>
          <VScroll>
            <ScrollBtn><Caret $c="#666" style={{ transform: "rotate(180deg)" }} /></ScrollBtn>
            <VTrack><VThumb /></VTrack>
            <ScrollBtn><Caret $c="#666" /></ScrollBtn>
          </VScroll>
        </SheetArea>

        <TabsBar>
          <SheetNav>
            <I w={6} h={9}><path d="M5 0L0 4.500 5 9z" fill="#c9c9c9" /></I>
            <I w={6} h={9}><path d="M1 0l5 4.500L1 9z" fill="#c9c9c9" /></I>
          </SheetNav>
          <SheetTab $on $w={118}>Pension Report</SheetTab>
          <SheetTab $w={187}>Health Care (OPEB) Report</SheetTab>
          <TabEdge />
          <AddSheet width="17" height="17" viewBox="0 0 17 17" fill="none">
            <circle cx="8.500" cy="8.500" r="7.500" stroke="#c4c4c4" strokeWidth="1.500" />
            <path d="M8.500 4v9M4 8.500h9" stroke="#c4c4c4" strokeWidth="2" />
          </AddSheet>
          <HGrip>
            <I w={2} h={11}><path d="M1 0v2M1 4.500v2M1 9v2" stroke="#b0b0b0" strokeWidth="2" /></I>
          </HGrip>
          <HScroll>
            <ScrollBtn><Caret $c="#666" style={{ transform: "rotate(90deg)" }} /></ScrollBtn>
            <HThumb />
            <ScrollBtn $end><Caret $c="#666" style={{ transform: "rotate(-90deg)" }} /></ScrollBtn>
          </HScroll>
        </TabsBar>

        <Status>
          <Ready>Ready</Ready>
          <StatusRight>
            <ViewBtn $on $w={39}>
              <I w={14} h={14}><path d="M.5.500h13v13H.5zM5 0v14M9.500 0v14M0 5h14M0 9.500h14" stroke="#777" /></I>
            </ViewBtn>
            <ViewBtn>
              <I w={14} h={15}><path d="M.5.500h13v14H.5z" stroke="#666" /><path d="M4 4h6M4 6.500h6M4 9h6M4 11.500h6" stroke="#666" /></I>
            </ViewBtn>
            <ViewBtn>
              <I w={14} h={14}><path d="M.5.500h13v13H.5zM0 8.500h14M7 0v8.500" stroke="#666" /></I>
            </ViewBtn>
            <Slot $w={10} style={{ marginLeft: 3 }}><I w={7} h={3}><path d="M0 1.500h7" stroke="#555" strokeWidth="2" /></I></Slot>
            <Zoom><ZoomTick /><ZoomThumb /></Zoom>
            <Slot $w={10}><I w={9} h={9}><path d="M0 4.500h9M4.500 0v9" stroke="#555" strokeWidth="2" /></I></Slot>
            <Slot $w={50} $c="#666" $fs={11.5}>70%</Slot>
          </StatusRight>
        </Status>

        <Taskbar>
          <Seg $w={49} $bg="#263130" />
          <Seg $w={343} $bg="#f4f4f4" $pr={16}>
            <I w={44} h={8}>
              <path d="M0 8l4-4 4 4zM17 8l4-5 4 5zM30 8l5-6 5 6z" fill="#eec4c4" />
            </I>
          </Seg>
          <Seg $w={247} $bg="#263130" />
          <Seg $w={49} $bg="#4f5a56" />
          <Seg $w={49} $bg="#a9652b" />
          <Clock>1:33 PM</Clock>
        </Taskbar>
      </Win>
      <Desktop />
    </Page>
  );
}
